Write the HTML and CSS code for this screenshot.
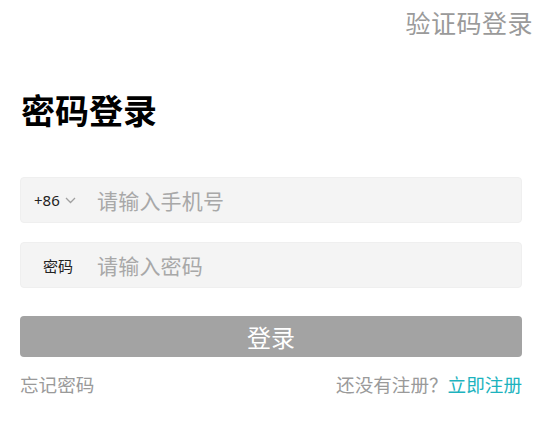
FILE: index.html
```html
<!DOCTYPE html>
<html lang="zh-CN">
<head>
<meta charset="utf-8">
<title>密码登录</title>
<link rel="stylesheet" href="styles.css">
</head>
<body>
<div class="page">
  <div class="topbar">
    <a class="switch">验证码登录</a>
  </div>
  <div class="content">
    <h1 class="title">密码登录</h1>
    <div class="field">
      <div class="prefix">
        <span class="code">+86</span>
        <svg class="chev" width="11" height="7" viewBox="0 0 11 7"><path d="M1 1 L5.5 5.5 L10 1" fill="none" stroke="#a0a0a0" stroke-width="1.3"/></svg>
      </div>
      <span class="placeholder">请输入手机号</span>
    </div>
    <div class="field">
      <div class="prefix label-prefix">
        <span class="label">密码</span>
      </div>
      <span class="placeholder">请输入密码</span>
    </div>
    <button class="submit">登录</button>
    <div class="links">
      <a class="forgot">忘记密码</a>
      <span class="register">还没有注册？<a class="reg-link">立即注册</a></span>
    </div>
  </div>
</div>
</body>
</html>
```
FILE: styles.css
```css
* { box-sizing: border-box; }
html, body {
  margin: 0;
  padding: 0;
  background: #fff;
}
body {
  font-family: "Noto Sans CJK SC", "Noto Sans", sans-serif;
  color: #000;
}
.page {
  width: 547px;
  height: 422px;
}
.topbar {
  display: flex;
  justify-content: flex-end;
  padding: 4px 14px 0 0;
  height: 44px;
}
.switch {
  font-size: 25px;
  line-height: 36px;
  color: #9a9a9a;
  letter-spacing: 0.5px;
}
.content {
  padding: 0 25px 0 20px;
}
.title {
  margin: 42px 0 0 1px;
  font-size: 34px;
  line-height: 48px;
  font-weight: 700;
  height: 48px;
}
.field {
  margin-top: 43px;
  height: 46px;
  background: #f4f4f4;
  border: 1px solid #efefef;
  border-radius: 4px;
  display: flex;
  align-items: center;
}
.field + .field {
  margin-top: 19px;
}
.prefix {
  width: 76px;
  display: flex;
  align-items: center;
  padding-left: 13px;
  gap: 5px;
}
.code {
  font-family: "Noto Sans", "Open Sans", sans-serif;
  font-size: 15px;
  color: #222;
}
.chev {
  margin-top: 1px;
}
.label-prefix {
  padding-left: 22px;
}
.label {
  font-size: 15px;
  color: #222;
}
.placeholder {
  font-size: 21px;
  color: #a8a8a8;
  letter-spacing: 0.2px;
}
.submit {
  display: block;
  width: 100%;
  margin-top: 28px;
  height: 41px;
  border: none;
  border-radius: 4px;
  background: #a3a3a3;
  color: #fff;
  font-family: "Noto Sans CJK SC", sans-serif;
  font-size: 24px;
  line-height: 41px;
  padding: 0;
}
.links {
  display: flex;
  justify-content: space-between;
  margin-top: 14px;
  font-size: 18.6px;
  line-height: 26px;
  color: #9a9a9a;
}
.reg-link {
  color: #1db3be;
}
```
